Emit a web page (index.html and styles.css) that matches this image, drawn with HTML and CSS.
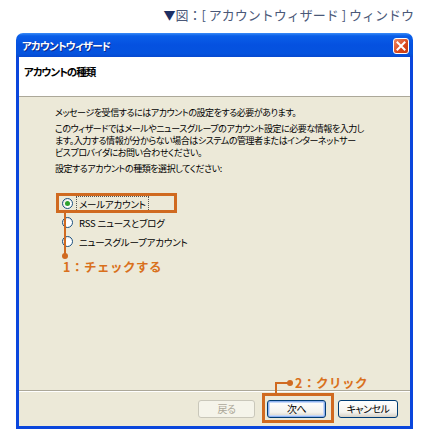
FILE: index.html
```html
<!DOCTYPE html>
<html lang="ja">
<head>
<meta charset="utf-8">
<link rel="stylesheet" href="styles.css">
</head>
<body>
<div class="caption"><span class="tri">▼</span>図：[ アカウントウィザード ] ウィンドウ</div>
<div class="window">
  <div class="titlebar">
    <span class="title">アカウントウィザード</span>
    <span class="close"><svg width="10" height="10" viewBox="0 0 10 10"><path d="M1.5 1.5 L8.5 8.5 M8.5 1.5 L1.5 8.5" stroke="#fff" stroke-width="2" stroke-linecap="square"/></svg></span>
  </div>
  <div class="client">
    <div class="header">アカウントの種類</div>
    <div class="body">
      <p class="para">メッセージを受信するにはアカウントの設定をする必要があります。</p>
      <p class="para">このウィザードではメールやニュースグループのアカウント設定に必要な情報を入力し<br>ます。入力する情報が分からない場合はシステムの管理者またはインターネットサー<br>ビスプロバイダにお問い合わせください。</p>
      <p class="para">設定するアカウントの種類を選択してください:</p>
      <div class="radios">
        <div class="radio-row"><span class="radio checked"></span><span class="rlabel focus">メールアカウント</span></div>
        <div class="radio-row"><span class="radio"></span><span class="rlabel">RSS ニュースとブログ</span></div>
        <div class="radio-row"><span class="radio"></span><span class="rlabel">ニュースグループアカウント</span></div>
      </div>
    </div>
    <div class="sep"></div>
    <div class="footer">
      <span class="btn disabled w57">戻る</span>
      <span class="btn default w59">次へ</span>
      <span class="btn w60">キャンセル</span>
    </div>
  </div>
  <div class="anno box1"></div>
  <div class="anno vline1"></div>
  <div class="anno dot dot1"></div>
  <div class="anno label label1">1：チェックする</div>
  <div class="anno box2"></div>
  <div class="anno vline2"></div>
  <div class="anno hline2"></div>
  <div class="anno dot dot2"></div>
  <div class="anno label label2">2：クリック</div>
</div>
</body>
</html>
```
FILE: styles.css
```css
body {
  margin: 0;
  background: #fff;
  font-family: "Noto Sans CJK JP", "DejaVu Sans", sans-serif;
  font-feature-settings: "palt";
}
.caption {
  height: 33px;
  box-sizing: border-box;
  padding: 6px 16px 0 0;
  text-align: right;
  font-size: 13px;
  line-height: 18px;
  color: #4a5878;
  font-feature-settings: normal;
}
.tri { color: #1d2f63; font-size: 12px; }
.window {
  position: relative;
  margin-left: 16px;
  width: 397px;
}
.titlebar {
  height: 24px;
  box-sizing: border-box;
  border-radius: 7px 7px 0 0;
  background: linear-gradient(#3a8cf8 0%, #0a5ee8 12%, #0551e0 50%, #0553de 85%, #0749d0 100%);
  display: flex;
  align-items: center;
  justify-content: space-between;
  padding: 1px 4px 0 6px;
}
.title {
  color: #fff;
  font-size: 10.5px;
  font-weight: bold;
  letter-spacing: -0.8px;
  text-shadow: 1px 1px 0 #0a2a8c;
}
.close {
  width: 16px;
  height: 16px;
  box-sizing: border-box;
  border: 1px solid #fff;
  border-radius: 3px;
  background: linear-gradient(135deg, #f08a62, #d8461c 60%, #c43a12);
  display: flex;
  align-items: center;
  justify-content: center;
}
.client {
  border: 3px solid #0a46dc;
  border-top: 0;
  background: #ece9d8;
}
.header {
  height: 40px;
  box-sizing: border-box;
  background: #fff;
  border-bottom: 1px solid #aca899;
  padding: 8px 5px 0;
  font-size: 10.5px;
  font-weight: bold;
  line-height: 14px;
  letter-spacing: -1px;
  color: #000;
}
.body {
  height: 293px;
  box-sizing: border-box;
  padding: 10px 0 0 36px;
  font-size: 9px;
  line-height: 12px;
  letter-spacing: -0.45px;
  color: #000;
  white-space: nowrap;
}
.para { margin: 0 0 4px; }
.radios { margin-top: 19px; padding-left: 7px; letter-spacing: -0.2px; }
.radio-row {
  height: 19px;
  display: flex;
  align-items: center;
  gap: 4px;
}
.radio {
  width: 11px;
  height: 11px;
  box-sizing: border-box;
  border: 1px solid #1c5180;
  border-radius: 50%;
  background: radial-gradient(circle at 60% 60%, #fff 40%, #d6d4cc);
  display: flex;
  align-items: center;
  justify-content: center;
}
.radio.checked::after {
  content: "";
  width: 5px;
  height: 5px;
  border-radius: 50%;
  background: #2fa22f;
}
.rlabel { font-size: 9.5px; padding: 1px 2px; }
.rlabel.focus { outline: 1px dotted #555; }
.sep {
  border-top: 1px solid #aca899;
  border-bottom: 1px solid #fff;
}
.footer {
  display: flex;
  justify-content: flex-end;
  align-items: center;
  padding: 8px 12px 8px;
  gap: 12px;
}
.btn {
  height: 18px;
  box-sizing: border-box;
  border: 1px solid #003c74;
  border-radius: 3px;
  background: linear-gradient(#fff, #f4f3ee 70%, #d6d0c5);
  font-size: 10px;
  line-height: 16px;
  text-align: center;
  letter-spacing: -0.5px;
  color: #000;
}
.btn.disabled {
  border-color: #c9c7ba;
  background: #f5f4ea;
  color: #aca899;
}
.btn.default { box-shadow: inset 0 0 0 1px #8fb2f0, inset 0 0 0 2px #c6d8f7; }
.w57 { width: 57px; }
.w59 { width: 59px; }
.w60 { width: 60px; }
.anno { position: absolute; }
.box1 {
  left: 40px; top: 160px; width: 121px; height: 20px;
  border: 3px solid #d06a20; box-sizing: border-box;
}
.vline1 { left: 48px; top: 180px; width: 2px; height: 42px; background: #d06a20; }
.dot { width: 6px; height: 6px; border-radius: 50%; background: #d06a20; }
.dot1 { left: 46px; top: 220px; }
.label {
  color: #d9701c;
  font-weight: bold;
  font-size: 12.5px;
  line-height: 16px;
  letter-spacing: 0.5px;
  white-space: nowrap;
  font-feature-settings: normal;
}
.label1 { left: 47px; top: 226px; }
.box2 {
  left: 246px; top: 360px; width: 72px; height: 30px;
  border: 3px solid #d06a20; box-sizing: border-box;
}
.vline2 { left: 259px; top: 349px; width: 2px; height: 11px; background: #d06a20; }
.hline2 { left: 259px; top: 349px; width: 14px; height: 2px; background: #d06a20; }
.dot2 { left: 271px; top: 347px; }
.label2 { left: 279px; top: 342px; }
```
